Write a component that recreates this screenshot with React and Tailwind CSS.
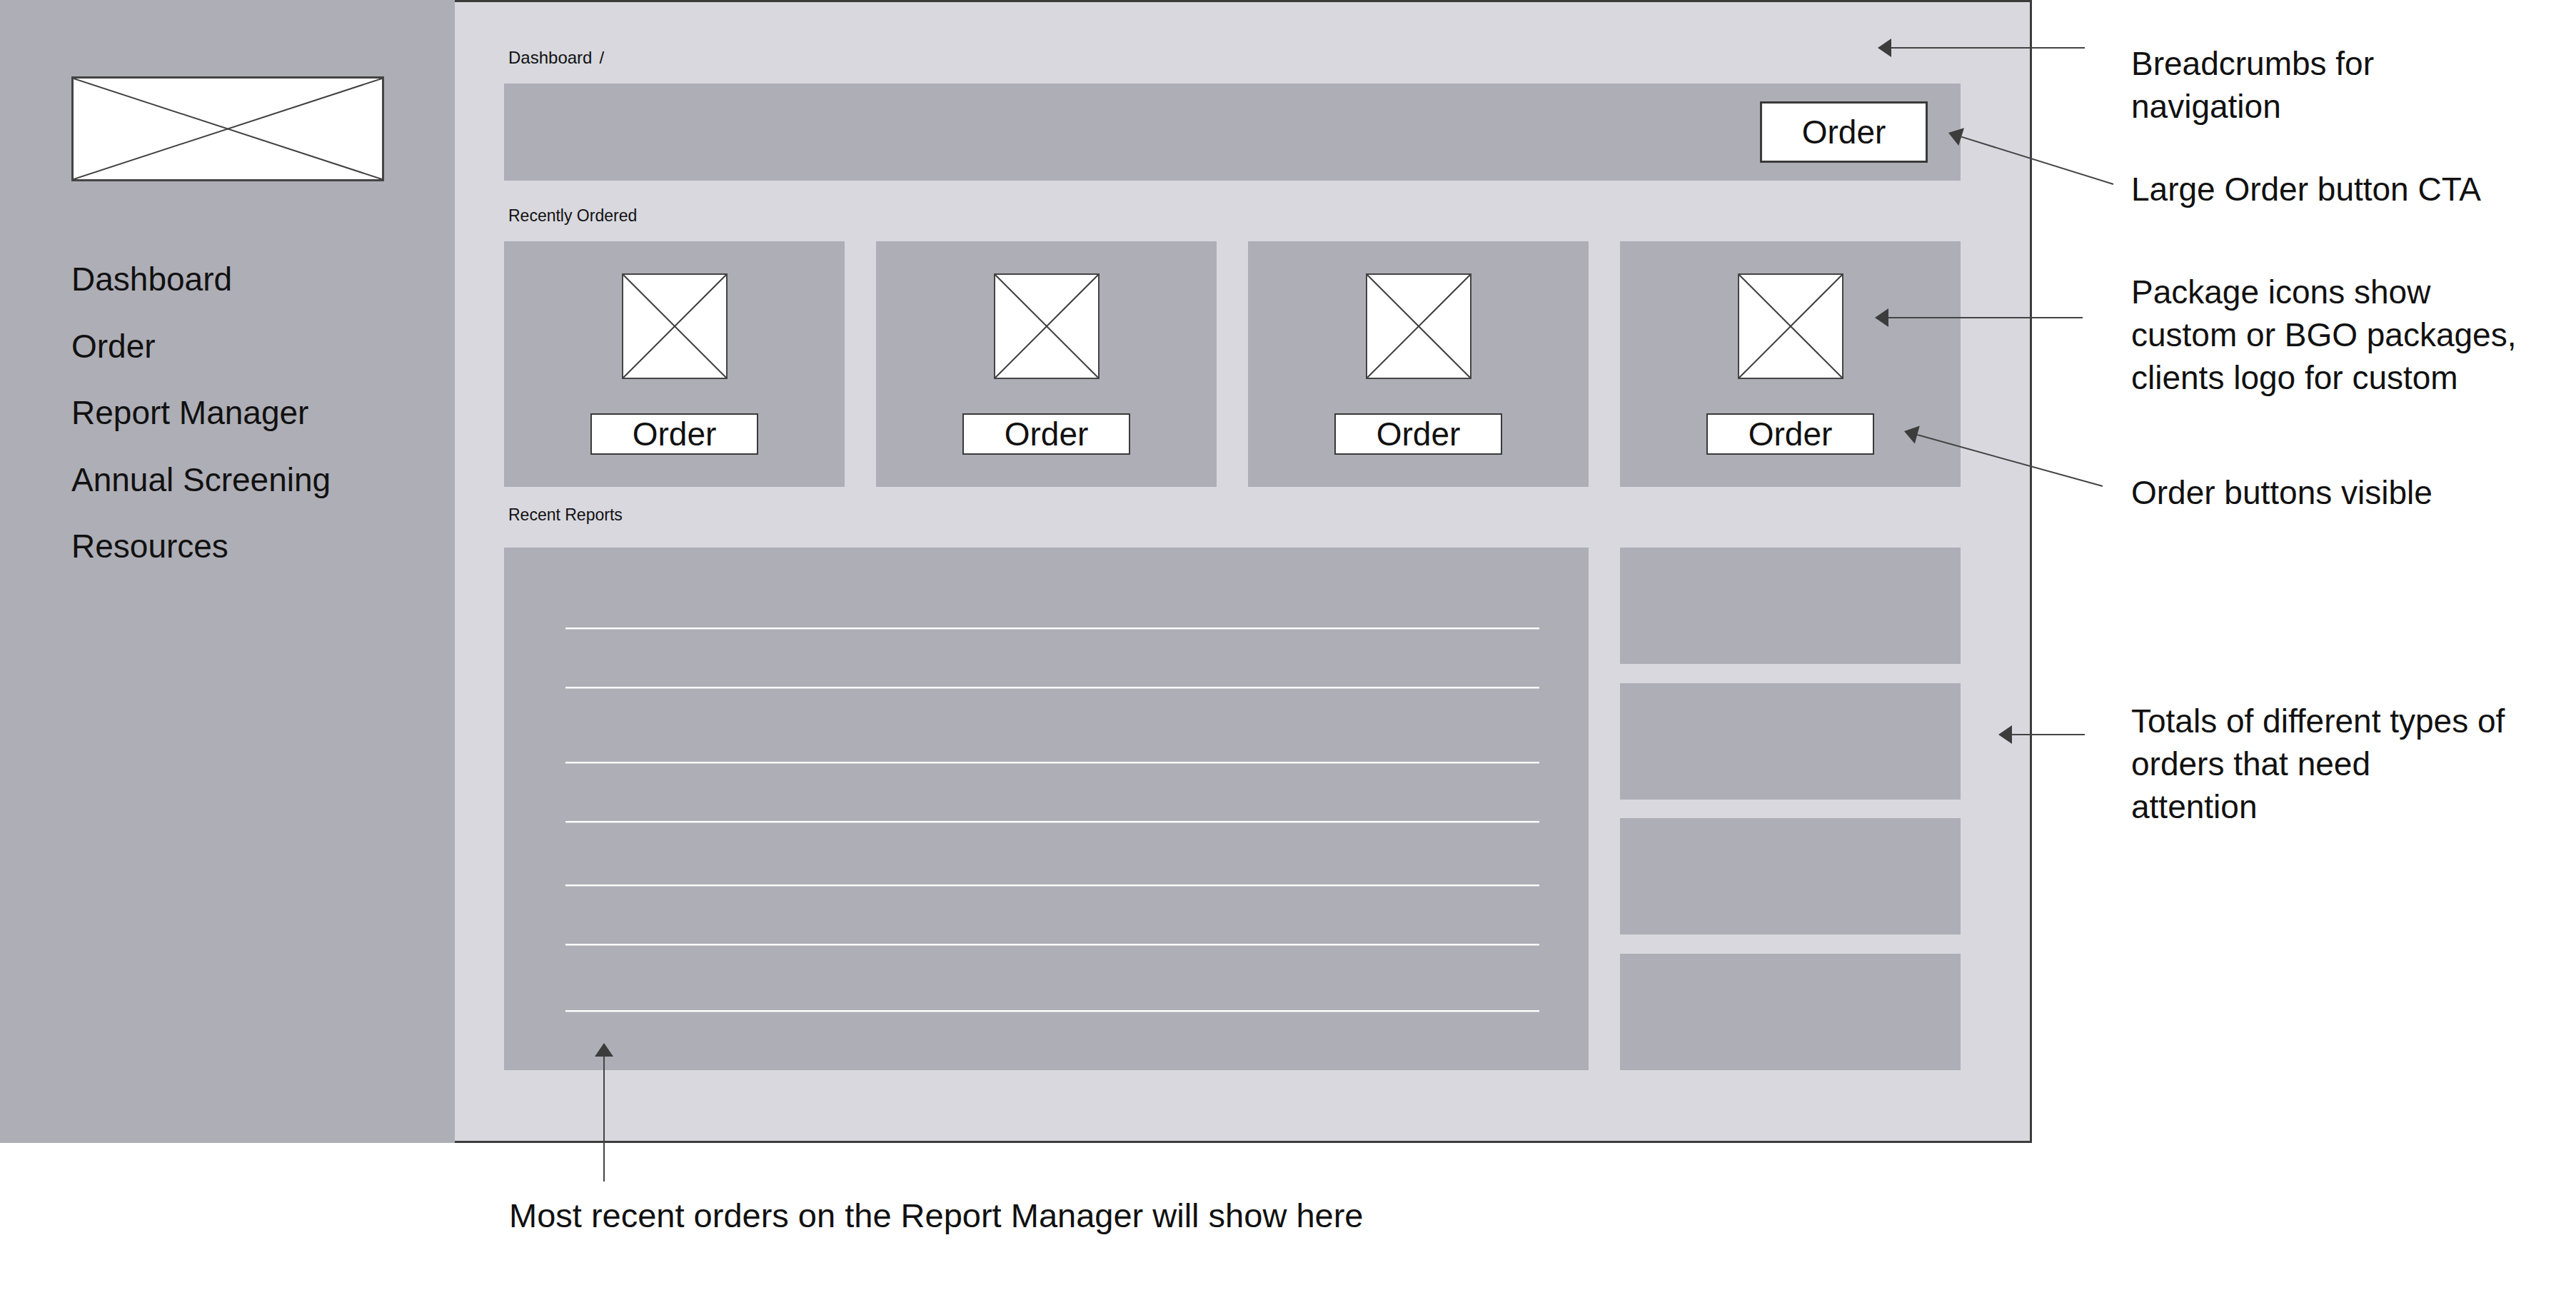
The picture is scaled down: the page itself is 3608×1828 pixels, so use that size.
import React from "react";

// Wireframe of the client dashboard, with the annotation notes around it.

const navItems = ["Dashboard", "Order", "Report Manager", "Annual Screening", "Resources"];

// gaps above each divider line in the Recent Reports panel (px, already minus line height)
const reportLines = ["mt-[112px]", "mt-[81px]", "mt-[103px]", "mt-[81px]", "mt-[87px]", "mt-[81px]", "mt-[91px]"];

const Placeholder = ({ className }) => (
  <div className={`relative bg-white ${className}`}>
    <svg className="absolute inset-0 h-full w-full" viewBox="0 0 100 100" preserveAspectRatio="none">
      <line x1="0" y1="0" x2="100" y2="100" stroke="#3f3f3f" strokeWidth="2" vectorEffect="non-scaling-stroke" />
      <line x1="100" y1="0" x2="0" y2="100" stroke="#3f3f3f" strokeWidth="2" vectorEffect="non-scaling-stroke" />
    </svg>
  </div>
);

const OrderButton = ({ className }) => (
  <button
    type="button"
    className={`flex items-center justify-center bg-white border-[#3a3a3a] text-[46px] leading-none text-[#111] ${className}`}
  >
    Order
  </button>
);

const PackageCard = () => (
  <div className="flex h-[344px] flex-col items-center bg-[#aeaeb6] pt-[45px]">
    <Placeholder className="h-[148px] w-[148px] border-2 border-[#444]" />
    <OrderButton className="mt-[48px] h-[58px] w-[235px] border-2" />
  </div>
);

// arrow from tail (x1,y1) to tip (x2,y2), with a filled head
const Arrow = ({ x1, y1, x2, y2 }) => {
  const dx = x2 - x1;
  const dy = y2 - y1;
  const len = Math.hypot(dx, dy);
  const ux = dx / len;
  const uy = dy / len;
  const bx = x2 - ux * 19;
  const by = y2 - uy * 19;
  const px = -uy * 13;
  const py = ux * 13;
  return (
    <g>
      <line x1={x1} y1={y1} x2={bx} y2={by} stroke="#444" strokeWidth="2" />
      <polygon points={`${x2},${y2} ${bx + px},${by + py} ${bx - px},${by - py}`} fill="#3c3c3c" />
    </g>
  );
};

const Note = ({ lines, className = "" }) => (
  <div className={`whitespace-nowrap leading-[60px] text-[#111] ${className}`}>
    {lines.map((l) => (
      <div key={l}>{l}</div>
    ))}
  </div>
);

export default function App() {
  return (
    <div className="relative h-[1828px] w-[3608px] overflow-hidden bg-white font-['Liberation_Sans',Arial,sans-serif] text-[#111]">
      <div className="flex items-start">
        {/* sidebar */}
        <aside className="h-[1601px] w-[637px] shrink-0 bg-[#aeaeb6] pl-[100px] pt-[107px]">
          <Placeholder className="h-[147px] w-[438px] border-[3px] border-[#444]" />
          <nav className="mt-[91px] text-[46px] leading-[93.5px]">
            {navItems.map((item) => (
              <div key={item}>{item}</div>
            ))}
          </nav>
        </aside>

        {/* main panel */}
        <main className="h-[1601px] w-[2209px] shrink-0 border-y-[3px] border-r-[3px] border-[#3c3c3c] bg-[#d8d8de] pl-[69px] pr-[97px] pt-[66px]">
          <div className="h-[24px] pl-[6px] text-[24px] leading-[24px]">
            Dashboard<span className="ml-[10px]">/</span>
          </div>

          <div className="mt-[24px] flex h-[136px] items-center justify-end bg-[#aeaeb6] pr-[46px]">
            <OrderButton className="h-[86px] w-[235px] border-[3px]" />
          </div>

          <div className="mt-[37px] h-[24px] pl-[6px] text-[23px] leading-[24px]">Recently Ordered</div>

          <div className="mt-[24px] grid grid-cols-4 gap-x-[44px]">
            <PackageCard />
            <PackageCard />
            <PackageCard />
            <PackageCard />
          </div>

          <div className="mt-[27px] h-[24px] pl-[6px] text-[23px] leading-[24px]">Recent Reports</div>

          <div className="mt-[34px] grid h-[732px] grid-cols-4 gap-x-[44px]">
            <div className="col-span-3 bg-[#aeaeb6] pl-[86px] pr-[69px]">
              {reportLines.map((m, i) => (
                <div key={i} className={`${m} h-[2px] bg-white shadow-[0_1px_0_#cfcfd5]`} />
              ))}
            </div>
            <div className="flex flex-col justify-between">
              <div className="h-[163px] bg-[#aeaeb6]" />
              <div className="h-[163px] bg-[#aeaeb6]" />
              <div className="h-[163px] bg-[#aeaeb6]" />
              <div className="h-[163px] bg-[#aeaeb6]" />
            </div>
          </div>
        </main>

        {/* annotation notes */}
        <div className="ml-[139px] pt-[59px] text-[46px]">
          <Note lines={["Breadcrumbs for", "navigation"]} />
          <Note className="mt-[56px]" lines={["Large Order button CTA"]} />
          <Note className="mt-[84px]" lines={["Package icons show", "custom or BGO packages,", "clients logo for custom"]} />
          <Note className="mt-[101px]" lines={["Order buttons visible"]} />
          <Note className="mt-[260px]" lines={["Totals of different types of", "orders that need", "attention"]} />
        </div>
      </div>

      <Note className="mt-[72px] pl-[713px] text-[47px]" lines={["Most recent orders on the Report Manager will show here"]} />

      {/* arrows drawn over the wireframe */}
      <svg className="pointer-events-none absolute left-0 top-0 h-[1828px] w-[3608px]" viewBox="0 0 3608 1828">
        <Arrow x1={2920} y1={67} x2={2630} y2={67} />
        <Arrow x1={2960} y1={258} x2={2729} y2={186} />
        <Arrow x1={2917} y1={445} x2={2626} y2={445} />
        <Arrow x1={2945} y1={681} x2={2667} y2={604} />
        <Arrow x1={2920} y1={1029} x2={2799} y2={1029} />
        <Arrow x1={846} y1={1655} x2={846} y2={1461} />
      </svg>
    </div>
  );
}
